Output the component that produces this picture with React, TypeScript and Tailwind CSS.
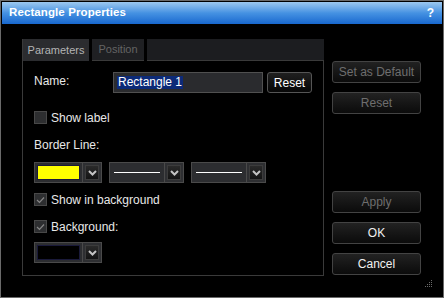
import React from "react";

const font = { fontFamily: '"Liberation Sans", Arial, sans-serif' };

function Chevron() {
  return (
    <svg width="9" height="6" viewBox="0 0 9 6" className="block">
      <path d="M1 1 L4.5 4.5 L8 1" stroke="#c4c4c4" strokeWidth="2" fill="none" strokeLinejoin="miter" />
    </svg>
  );
}

function DropBtn() {
  return (
    <div className="w-[19px] h-full p-[2px] bg-[#2e2f32] border-l border-[#4a4a4a]">
      <div className="w-full h-full flex items-center justify-center bg-gradient-to-b from-[#2a2a2a] to-[#141414] border border-[#3c3c3c]">
        <Chevron />
      </div>
    </div>
  );
}

function ColorPicker({ color }: { color: string }) {
  return (
    <div className="flex w-[68px] h-[21px] border border-[#4a4a4a] bg-[#2c2d30]">
      <div className="flex-1 p-[2px]">
        <div className="w-full h-full border border-[#1a1a3a]" style={{ background: color }} />
      </div>
      <DropBtn />
    </div>
  );
}

function LineDrop() {
  return (
    <div className="flex w-[75px] h-[21px] border border-[#4a4a4a] bg-[#2c2d30]">
      <div className="flex-1 flex items-center px-[4px]">
        <div className="w-full h-[1px] bg-white" />
      </div>
      <DropBtn />
    </div>
  );
}

function Check({ checked }: { checked?: boolean }) {
  return (
    <div className="w-[13px] h-[13px] bg-[#2d2e30] border border-[#484848] flex items-center justify-center">
      {checked && (
        <svg width="9" height="8" viewBox="0 0 9 8">
          <path d="M1 4 L3.5 6.5 L8 1.5" stroke="#858585" strokeWidth="1.2" fill="none" />
        </svg>
      )}
    </div>
  );
}

function SideBtn({ label, disabled, mt }: { label: string; disabled?: boolean; mt: string }) {
  return (
    <div
      className={`${mt} w-[89px] h-[22px] rounded-[3px] border border-[#434343] bg-gradient-to-b from-[#222222] to-[#0b0b0b] flex items-center justify-center text-[12px] ${
        disabled ? "text-[#6e6e6e]" : "text-[#f0f0f0]"
      }`}
    >
      {label}
    </div>
  );
}

export default function App() {
  return (
    <div style={font} className="w-[444px] h-[298px] bg-black border border-[#6a6a6a] p-px relative text-[#e8e8e8]">
      <div className="h-[22px] bg-gradient-to-b from-[#9cc8ef] via-[#4592e2] to-[#1868cf] flex items-center justify-between pl-[7px] pr-[8px]">
        <span className="text-white font-bold text-[11.5px] tracking-[0.1px]">Rectangle Properties</span>
        <span className="text-white font-bold text-[12px]">?</span>
      </div>
      <div className="flex">
        <div className="ml-[20px] mt-[15px] w-[302px] h-[237px] flex flex-col">
          <div className="flex h-[22px] gap-[3px]">
            <div className="w-[67px] bg-[#2b2c2f] flex items-center justify-center text-[11px] text-[#b4b4b4] border-l border-[#3a3a3a]">
              Parameters
            </div>
            <div className="w-[52px] bg-[#1f2023] flex items-center justify-center text-[11px] text-[#646464] border-b border-[#3a3a3a]">
              Position
            </div>
            <div className="flex-1 bg-[#1c1d20] border-b border-[#3a3a3a]" />
          </div>
          <div className="flex-1 border-l border-r border-b border-[#3a3a3a] flex flex-col pl-[11px] text-[12px]">
            <div className="mt-[11px] h-[21px] flex items-center">
              <span className="w-[79px] -mt-[4px]">Name:</span>
              <div className="w-[150px] h-[21px] bg-[#2a2b2e] border border-[#505050] flex items-center pl-[3px]">
                <span className="bg-[#0c2a78] text-white px-[1px] leading-[13px]">Rectangle 1</span>
              </div>
              <div className="ml-[4px] w-[45px] h-[21px] rounded-[3px] border border-[#555] bg-gradient-to-b from-[#202020] to-[#070707] flex items-center justify-center text-white">
                Reset
              </div>
            </div>
            <div className="mt-[18px] flex items-center gap-[4px] h-[13px]">
              <Check />
              <span>Show label</span>
            </div>
            <div className="mt-[14px] h-[14px] leading-[14px]">Border Line:</div>
            <div className="mt-[10px] flex gap-[7px]">
              <ColorPicker color="#ffff00" />
              <LineDrop />
              <LineDrop />
            </div>
            <div className="mt-[10px] flex items-center gap-[4px] h-[13px]">
              <Check checked />
              <span>Show in background</span>
            </div>
            <div className="mt-[14px] flex items-center gap-[4px] h-[13px]">
              <Check checked />
              <span>Background:</span>
            </div>
            <div className="mt-[9px]">
              <ColorPicker color="#000000" />
            </div>
          </div>
        </div>
        <div className="ml-[8px] flex flex-col">
          <SideBtn label="Set as Default" disabled mt="mt-[37px]" />
          <SideBtn label="Reset" disabled mt="mt-[9px]" />
          <SideBtn label="Apply" disabled mt="mt-[77px]" />
          <SideBtn label="OK" mt="mt-[9px]" />
          <SideBtn label="Cancel" mt="mt-[9px]" />
        </div>
      </div>
      <svg width="8" height="8" viewBox="0 0 8 8" className="absolute left-[424px] top-[279px]">
        {[
          [6, 0],
          [4, 2],
          [6, 2],
          [2, 4],
          [4, 4],
          [6, 4],
          [0, 6],
          [2, 6],
          [4, 6],
          [6, 6],
        ].map(([x, y], i) => (
          <rect key={i} x={x} y={y} width="1" height="1" fill="#6a6a6a" />
        ))}
      </svg>
    </div>
  );
}
